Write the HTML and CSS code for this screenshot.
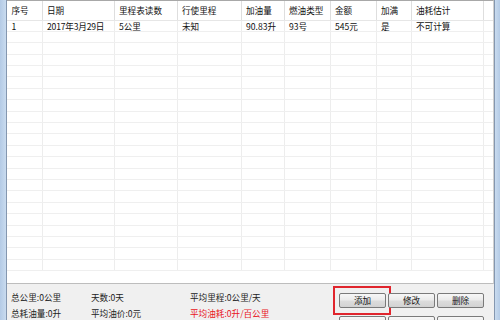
FILE: index.html
```html
<!DOCTYPE html>
<html>
<head>
<meta charset="utf-8">
<link rel="stylesheet" href="styles.css">
</head>
<body>
<div class="win">
  <div class="frame-l"></div>
  <div class="main">
    <div class="list">
      <div class="row head">
        <div class="c c1">序号</div><div class="c c2">日期</div><div class="c c3">里程表读数</div><div class="c c4">行使里程</div><div class="c c5">加油量</div><div class="c c6">燃油类型</div><div class="c c7">金额</div><div class="c c8">加满</div><div class="c c9">油耗估计</div><div class="c cf"></div>
      </div>
      <div class="row">
        <div class="c c1">1</div><div class="c c2">2017年3月29日</div><div class="c c3">5公里</div><div class="c c4">未知</div><div class="c c5">90.83升</div><div class="c c6">93号</div><div class="c c7">545元</div><div class="c c8">是</div><div class="c c9">不可计算</div><div class="c cf"></div>
      </div>
      <div class="row"><div class="c c1"></div><div class="c c2"></div><div class="c c3"></div><div class="c c4"></div><div class="c c5"></div><div class="c c6"></div><div class="c c7"></div><div class="c c8"></div><div class="c c9"></div><div class="c cf"></div></div>
      <div class="row"><div class="c c1"></div><div class="c c2"></div><div class="c c3"></div><div class="c c4"></div><div class="c c5"></div><div class="c c6"></div><div class="c c7"></div><div class="c c8"></div><div class="c c9"></div><div class="c cf"></div></div>
      <div class="row"><div class="c c1"></div><div class="c c2"></div><div class="c c3"></div><div class="c c4"></div><div class="c c5"></div><div class="c c6"></div><div class="c c7"></div><div class="c c8"></div><div class="c c9"></div><div class="c cf"></div></div>
      <div class="row"><div class="c c1"></div><div class="c c2"></div><div class="c c3"></div><div class="c c4"></div><div class="c c5"></div><div class="c c6"></div><div class="c c7"></div><div class="c c8"></div><div class="c c9"></div><div class="c cf"></div></div>
      <div class="row"><div class="c c1"></div><div class="c c2"></div><div class="c c3"></div><div class="c c4"></div><div class="c c5"></div><div class="c c6"></div><div class="c c7"></div><div class="c c8"></div><div class="c c9"></div><div class="c cf"></div></div>
      <div class="row"><div class="c c1"></div><div class="c c2"></div><div class="c c3"></div><div class="c c4"></div><div class="c c5"></div><div class="c c6"></div><div class="c c7"></div><div class="c c8"></div><div class="c c9"></div><div class="c cf"></div></div>
      <div class="row"><div class="c c1"></div><div class="c c2"></div><div class="c c3"></div><div class="c c4"></div><div class="c c5"></div><div class="c c6"></div><div class="c c7"></div><div class="c c8"></div><div class="c c9"></div><div class="c cf"></div></div>
      <div class="row"><div class="c c1"></div><div class="c c2"></div><div class="c c3"></div><div class="c c4"></div><div class="c c5"></div><div class="c c6"></div><div class="c c7"></div><div class="c c8"></div><div class="c c9"></div><div class="c cf"></div></div>
      <div class="row"><div class="c c1"></div><div class="c c2"></div><div class="c c3"></div><div class="c c4"></div><div class="c c5"></div><div class="c c6"></div><div class="c c7"></div><div class="c c8"></div><div class="c c9"></div><div class="c cf"></div></div>
      <div class="row"><div class="c c1"></div><div class="c c2"></div><div class="c c3"></div><div class="c c4"></div><div class="c c5"></div><div class="c c6"></div><div class="c c7"></div><div class="c c8"></div><div class="c c9"></div><div class="c cf"></div></div>
      <div class="row"><div class="c c1"></div><div class="c c2"></div><div class="c c3"></div><div class="c c4"></div><div class="c c5"></div><div class="c c6"></div><div class="c c7"></div><div class="c c8"></div><div class="c c9"></div><div class="c cf"></div></div>
      <div class="row"><div class="c c1"></div><div class="c c2"></div><div class="c c3"></div><div class="c c4"></div><div class="c c5"></div><div class="c c6"></div><div class="c c7"></div><div class="c c8"></div><div class="c c9"></div><div class="c cf"></div></div>
      <div class="row"><div class="c c1"></div><div class="c c2"></div><div class="c c3"></div><div class="c c4"></div><div class="c c5"></div><div class="c c6"></div><div class="c c7"></div><div class="c c8"></div><div class="c c9"></div><div class="c cf"></div></div>
      <div class="row"><div class="c c1"></div><div class="c c2"></div><div class="c c3"></div><div class="c c4"></div><div class="c c5"></div><div class="c c6"></div><div class="c c7"></div><div class="c c8"></div><div class="c c9"></div><div class="c cf"></div></div>
      <div class="row"><div class="c c1"></div><div class="c c2"></div><div class="c c3"></div><div class="c c4"></div><div class="c c5"></div><div class="c c6"></div><div class="c c7"></div><div class="c c8"></div><div class="c c9"></div><div class="c cf"></div></div>
      <div class="row"><div class="c c1"></div><div class="c c2"></div><div class="c c3"></div><div class="c c4"></div><div class="c c5"></div><div class="c c6"></div><div class="c c7"></div><div class="c c8"></div><div class="c c9"></div><div class="c cf"></div></div>
      <div class="row"><div class="c c1"></div><div class="c c2"></div><div class="c c3"></div><div class="c c4"></div><div class="c c5"></div><div class="c c6"></div><div class="c c7"></div><div class="c c8"></div><div class="c c9"></div><div class="c cf"></div></div>
      <div class="row"><div class="c c1"></div><div class="c c2"></div><div class="c c3"></div><div class="c c4"></div><div class="c c5"></div><div class="c c6"></div><div class="c c7"></div><div class="c c8"></div><div class="c c9"></div><div class="c cf"></div></div>
      <div class="row"><div class="c c1"></div><div class="c c2"></div><div class="c c3"></div><div class="c c4"></div><div class="c c5"></div><div class="c c6"></div><div class="c c7"></div><div class="c c8"></div><div class="c c9"></div><div class="c cf"></div></div>
      <div class="row"><div class="c c1"></div><div class="c c2"></div><div class="c c3"></div><div class="c c4"></div><div class="c c5"></div><div class="c c6"></div><div class="c c7"></div><div class="c c8"></div><div class="c c9"></div><div class="c cf"></div></div>
      <div class="row"><div class="c c1"></div><div class="c c2"></div><div class="c c3"></div><div class="c c4"></div><div class="c c5"></div><div class="c c6"></div><div class="c c7"></div><div class="c c8"></div><div class="c c9"></div><div class="c cf"></div></div>
    </div>
    <div class="panel">
      <div class="stats">
        <div>总公里:0公里</div><div>天数:0天</div><div>平均里程:0公里/天</div>
        <div>总耗油量:0升</div><div>平均油价:0元</div><div class="red">平均油耗:0升/百公里</div>
      </div>
      <div class="btns">
        <div class="brow">
          <div class="btn">添加<span class="hl"></span></div><div class="btn">修改</div><div class="btn">删除</div>
        </div>
        <div class="brow">
          <div class="btn"></div><div class="btn"></div><div class="btn"></div>
        </div>
      </div>
    </div>
  </div>
  <div class="frame-r"></div>
</div>
</body>
</html>
```

FILE: styles.css
```css
* { box-sizing: border-box; }
html, body { margin: 0; padding: 0; }
body {
  width: 500px;
  height: 320px;
  overflow: hidden;
  background: #f0f0f0;
  font-family: "Noto Sans CJK SC", "Noto Sans", sans-serif;
  font-size: 8.6px;
  color: #111;
}
.win { display: flex; width: 500px; height: 320px; overflow: hidden; }
.frame-l {
  flex: none;
  width: 7px;
  background: linear-gradient(to right, #b4cbe6, #c9dbef);
  border-right: 1px solid #8497b0;
}
.frame-r {
  flex: none;
  width: 6px;
  background: linear-gradient(to right, #c9dbef, #b4cbe6);
  border-left: 1px solid #8497b0;
}
.main {
  flex: 1;
  display: flex;
  flex-direction: column;
  background: #f0f0f0;
  overflow: hidden;
}
.list {
  flex: none;
  height: 284px;
  overflow: hidden;
  background: #fff;
  border-top: 1px solid #a8a8a8;
  border-bottom: 1px solid #bdbdbd;
  border-right: 1px solid #d0d0d0;
}
.row {
  display: flex;
  height: 11.4px;
  line-height: 10.4px;
  border-bottom: 1px solid #efefef;
}
.row.head {
  height: 19.5px;
  line-height: 18px;
  border-bottom: 1px solid #e6e6e6;
}
.c {
  flex: none;
  padding-left: 4px;
  border-right: 1px solid #ededed;
  white-space: nowrap;
  overflow: hidden;
}
.head .c { border-right-color: #dedede; }
.c1 { width: 36px; padding-left: 4.5px; }
.c2 { width: 72px; letter-spacing: -0.2px; }
.c3 { width: 63px; }
.c4 { width: 64px; }
.c5 { width: 43px; }
.c6 { width: 46px; }
.c7 { width: 46px; }
.c8 { width: 35px; }
.c9 { width: 72px; }
.cf { flex: 1; border-right: none; }
.panel {
  flex: none;
  height: 36px;
  display: flex;
  justify-content: space-between;
  padding-left: 4px;
}
.stats {
  display: grid;
  grid-template-columns: 80px 99px auto;
  grid-auto-rows: 16px;
  line-height: 16px;
  padding-top: 5px;
  color: #222;
}
.red { color: #e8141c; }
.btns {
  display: flex;
  flex-direction: column;
  gap: 8px;
  padding-top: 9px;
  padding-right: 10px;
}
.brow { display: flex; gap: 2px; flex: none; }
.btn {
  position: relative;
  flex: none;
  width: 47px;
  height: 15px;
  line-height: 13px;
  text-align: center;
  border: 1px solid #7a7a7a;
  border-radius: 2px;
  background: linear-gradient(to bottom, #f7f7f7 0%, #ebebeb 45%, #dcdcdc 55%, #d2d2d2 100%);
  color: #111;
}
.hl {
  position: absolute;
  left: -7px;
  top: -8px;
  width: 58px;
  height: 29px;
  border: 2px solid #e0252d;
}
```
